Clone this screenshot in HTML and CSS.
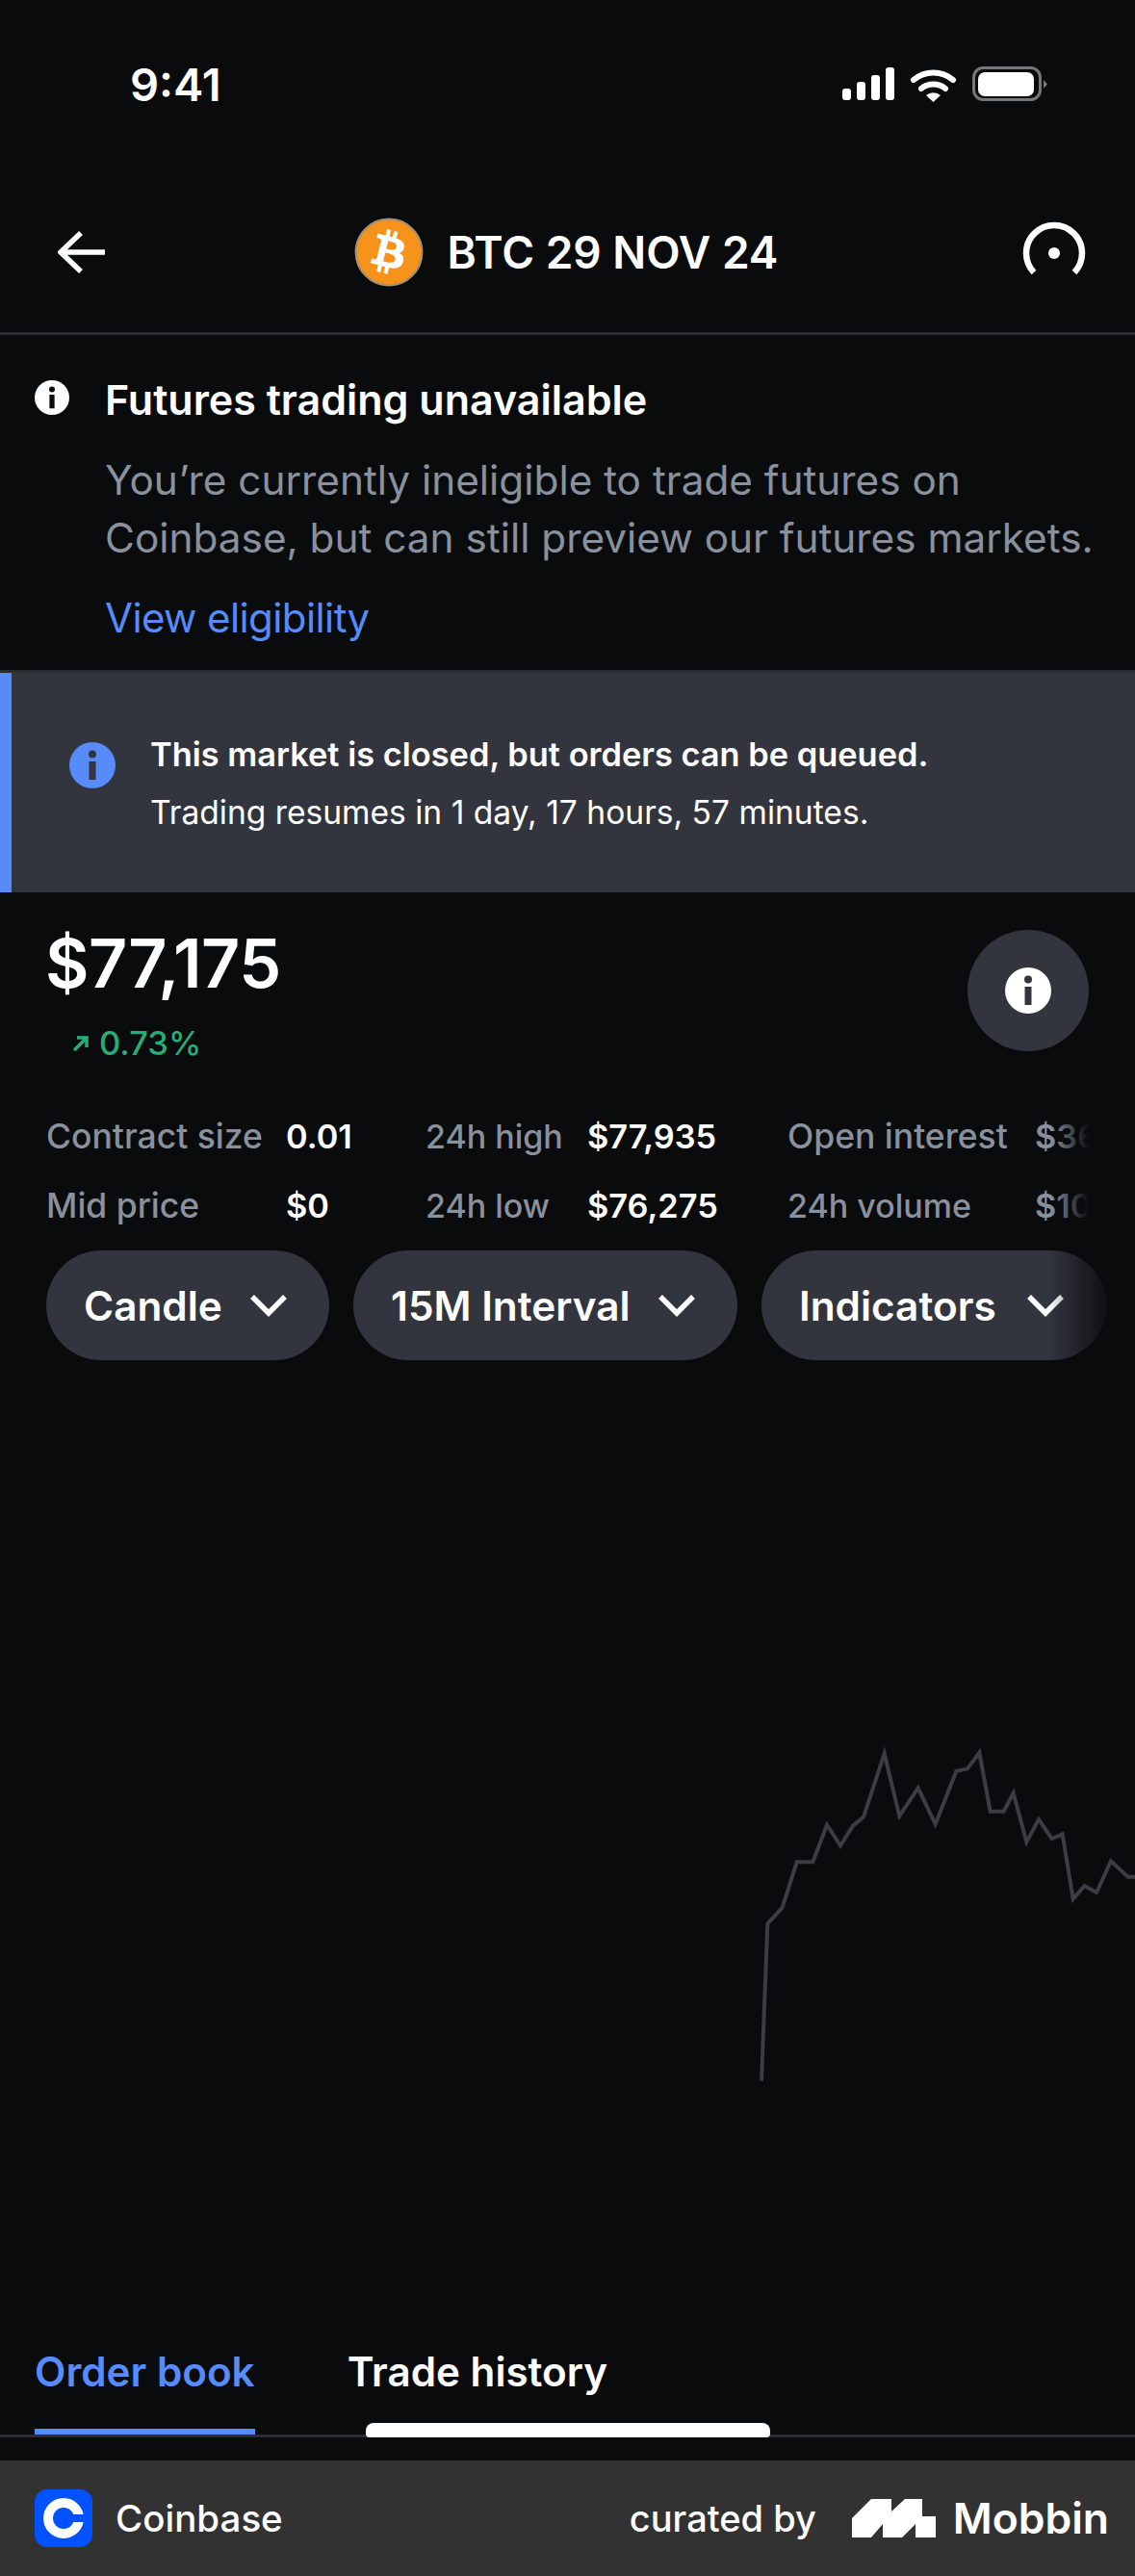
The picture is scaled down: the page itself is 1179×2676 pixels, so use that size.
FILE: index.html
```html
<!DOCTYPE html>
<html lang="en">
<head>
    <meta charset="UTF-8">
    <meta name="viewport" content="width=device-width, initial-scale=1.0">
    <title>BTC 29 NOV 24</title>
    <link rel="stylesheet" href="styles.css">
</head>
<body>
<div class="screen">
    <div class="status-bar">
        <span class="status-time">9:41</span>
        <svg class="status-icons" width="240" height="65" viewBox="0 0 240 65">
            <rect x="15" y="37" width="9" height="12" rx="3" fill="#fff"/>
            <rect x="30" y="30" width="9" height="19" rx="3" fill="#fff"/>
            <rect x="45" y="23" width="9" height="26" rx="3" fill="#fff"/>
            <rect x="60" y="15" width="9" height="34" rx="3" fill="#fff"/>
            <path d="M89 28 A32 32 0 0 1 130 28" fill="none" stroke="#fff" stroke-width="6" stroke-linecap="round"/>
            <path d="M97 37 A20 20 0 0 1 122 37" fill="none" stroke="#fff" stroke-width="6" stroke-linecap="round"/>
            <path d="M102 44 A12 12 0 0 1 117 44 L109.5 51 Z" fill="#fff"/>
            <rect x="151.5" y="15.5" width="69" height="33" rx="10" fill="none" stroke="#777" stroke-width="3"/>
            <rect x="156" y="20" width="58" height="25" rx="7" fill="#fff"/>
            <path d="M224 28 L228 32.500 L224 37 Z" fill="#777"/>
        </svg>
    </div>

    <header class="nav">
        <svg class="nav-back" width="50" height="44" viewBox="0 0 50 44">
            <path d="M24 2 L3 22 L24 42 M3 22 H49" fill="none" stroke="#fff" stroke-width="5.500"/>
        </svg>
        <div class="nav-title">
            <svg width="72" height="72" viewBox="0 0 64 64">
                <circle cx="32" cy="32" r="30.500" fill="#f7931a" stroke="#a8906f" stroke-width="2"/>
                <path fill="#fff" d="M46.100 27.400c.6-4.300-2.700-6.600-7.200-8.200l1.500-5.900-3.600-.9-1.400 5.700c-.9-.2-1.900-.5-2.900-.7l1.400-5.800-3.600-.9-1.500 5.900c-.8-.2-1.500-.3-2.200-.5l-5-1.200-1 3.800s2.700.6 2.600.7c1.500.4 1.700 1.300 1.700 2.100l-1.700 6.700c.1 0 .2.100.4.100l-.4-.1-2.400 9.400c-.2.400-.6 1.100-1.700.8 0 .1-2.600-.7-2.600-.7l-1.800 4.100 4.700 1.200c.9.200 1.700.4 2.600.7l-1.500 6 3.600.9 1.500-5.900c1 .3 1.900.5 2.900.8l-1.500 5.900 3.600.9 1.500-6c6.200 1.200 10.800.7 12.800-4.900 1.600-4.500-.1-7.100-3.300-8.800 2.300-.5 4.100-2.100 4.500-5.300zM37.900 38.900c-1.100 4.500-8.700 2.100-11.200 1.500l2-8c2.500.6 10.400 1.800 9.200 6.500zm1.100-11.600c-1 4.100-7.300 2-9.400 1.500l1.800-7.200c2.100.5 8.700 1.500 7.600 5.700z"/>
            </svg>
            <span>BTC 29 NOV 24</span>
        </div>
        <svg class="nav-gauge" width="90" height="80" viewBox="0 0 90 80">
            <path d="M24 65 A29 29 0 1 1 66 65" fill="none" stroke="#fff" stroke-width="6.500"/>
            <circle cx="45" cy="45" r="6" fill="#fff"/>
        </svg>
    </header>

    <section class="notice">
        <svg class="info-icon" width="36" height="36" viewBox="0 0 48 48">
            <circle cx="24" cy="24" r="24" fill="#fff"/>
            <circle cx="24" cy="12.500" r="4" fill="#0a0b0d"/>
            <rect x="20.500" y="20" width="7" height="19" fill="#0a0b0d"/>
        </svg>
        <div class="notice-body">
            <h2 class="notice-title">Futures trading unavailable</h2>
            <p class="notice-text">You’re currently ineligible to trade futures on<br>Coinbase, but can still preview our futures markets.</p>
            <a class="notice-link">View eligibility</a>
        </div>
    </section>

    <section class="closed">
        <svg class="closed-icon" width="48" height="48" viewBox="0 0 48 48">
            <circle cx="24" cy="24" r="24" fill="#578bfa"/>
            <circle cx="24" cy="12.500" r="4" fill="#32353d"/>
            <rect x="20.500" y="20" width="7" height="19" fill="#32353d"/>
        </svg>
        <div>
            <p class="closed-title">This market is closed, but orders can be queued.</p>
            <p class="closed-text">Trading resumes in 1 day, 17 hours, 57 minutes.</p>
        </div>
    </section>

    <section class="price-row">
        <div>
            <div class="price">$77,175</div>
            <div class="change">
                <svg width="20" height="20" viewBox="0 0 20 20">
                    <path d="M3 17 L16 4 M6 4 H16 V14" fill="none" stroke="#27ad75" stroke-width="3.500"/>
                </svg>
                <span>0.73%</span>
            </div>
        </div>
        <div class="round-btn">
            <svg width="48" height="48" viewBox="0 0 48 48">
                <circle cx="24" cy="24" r="24" fill="#fff"/>
                <circle cx="24" cy="12.500" r="4" fill="#32353d"/>
                <rect x="20.500" y="20" width="7" height="19" fill="#32353d"/>
            </svg>
        </div>
    </section>

    <section class="stats">
        <span class="stat-label">Contract size</span><span class="stat-value">0.01</span>
        <span class="stat-label stat-24h">24h high</span><span class="stat-value">$77,935</span>
        <span class="stat-label">Open interest</span><span class="stat-value stat-clipped">$36</span>
        <span class="stat-label">Mid price</span><span class="stat-value">$0</span>
        <span class="stat-label stat-24h">24h low</span><span class="stat-value">$76,275</span>
        <span class="stat-label stat-24h">24h volume</span><span class="stat-value stat-clipped">$10</span>
        <div class="stats-fade"></div>
    </section>

    <section class="pills">
        <div class="pill pill-candle"><span>Candle</span>
            <svg width="38" height="24" viewBox="0 0 38 24"><path d="M2 3 L19 20 L36 3" fill="none" stroke="#fff" stroke-width="5.500"/></svg>
        </div>
        <div class="pill pill-interval"><span>15M Interval</span>
            <svg width="38" height="24" viewBox="0 0 38 24"><path d="M2 3 L19 20 L36 3" fill="none" stroke="#fff" stroke-width="5.500"/></svg>
        </div>
        <div class="pill pill-indicators"><span>Indicators</span>
            <svg width="38" height="24" viewBox="0 0 38 24"><path d="M2 3 L19 20 L36 3" fill="none" stroke="#fff" stroke-width="5.500"/></svg>
            <div class="pill-fade"></div>
        </div>
    </section>

    <section class="chart">
        <svg width="439" height="400" viewBox="0 0 1317 1200">
            <polyline fill="none" stroke="#3a3d43" stroke-width="12" points="153,1145 172,655 218,605 263,463 313,463 357,347 399,412 438,350 471,323 536,125 583,320 641,232 695,345 760,180 795,172 832,122 866,305 908,305 938,248 979,400 1017,330 1058,390 1091,376 1124,578 1160,537 1197,558 1242,460 1295,509 1317,509"/>
        </svg>
    </section>

    <nav class="tabs">
        <div class="tab tab-active">Order book</div>
        <div class="tab">Trade history</div>
    </nav>
    <div class="home-bar"></div>

    <footer class="credit">
        <div class="credit-side">
            <svg width="60" height="60" viewBox="0 0 60 60">
                <rect width="60" height="60" rx="13" fill="#0052ff"/>
                <circle cx="30" cy="30" r="16" fill="none" stroke="#fff" stroke-width="10"/>
                <rect x="30" y="26" width="24" height="8" fill="#0052ff"/>
            </svg>
            <span class="credit-app">Coinbase</span>
        </div>
        <div class="credit-side">
            <span class="credit-by">curated by</span>
            <svg class="mobbin-mark" width="87" height="40" viewBox="0 0 87 40">
                <polygon fill="#fff" points="0,20 20,0 41,0 41,13 55,0 73,0 73,18 87,18 87,40 66,40 66,26 52,40 32,40 32,26 20,40 0,40"/>
            </svg>
            <span class="credit-mobbin">Mobbin</span>
        </div>
    </footer>
</div>
</body>
</html>
```

FILE: styles.css
```css
* {
    box-sizing: border-box;
}
body {
    margin: 0;
    background: #0a0b0d;
    font-family: Inter, "Liberation Sans", sans-serif;
    color: #fff;
}
p, h2 {
    margin: 0;
}
.screen {
    position: relative;
    width: 1179px;
    height: 2676px;
    display: flex;
    flex-direction: column;
    overflow: hidden;
}

/* status bar */
.status-bar {
    height: 175px;
    padding: 55px 79px 0 135px;
    display: flex;
    justify-content: space-between;
    align-items: flex-start;
}
.status-time {
    font-size: 47px;
    line-height: 65px;
    font-weight: 600;
}

/* nav */
.nav {
    height: 173px;
    padding: 3px 52px 0 60px;
    border-bottom: 3px solid #2a2d31;
    display: flex;
    align-items: center;
    justify-content: space-between;
}
.nav-title {
    display: flex;
    align-items: center;
    gap: 25px;
    margin-left: 16px;
    font-size: 46px;
    font-weight: 600;
}
.nav-gauge {
    margin-bottom: 7px;
    margin-right: -13px;
}

/* futures notice */
.notice {
    height: 351px;
    padding: 47px 14px 0 36px;
    border-bottom: 3px solid #2a2d31;
    display: flex;
    gap: 37px;
}
.notice-title {
    font-size: 43px;
    line-height: 60px;
    font-weight: 600;
    margin-top: -10px;
}
.notice-text {
    font-size: 42.300px;
    line-height: 60px;
    color: #8a919e;
    margin-top: 24px;
}
.notice-link {
    display: block;
    font-size: 42px;
    line-height: 60px;
    letter-spacing: -0.6px;
    color: #578bfa;
    margin-top: 23px;
}

/* market closed */
.closed {
    height: 228px;
    padding-top: 55px;
    padding-left: 60px;
    background: #32353d;
    border-left: 12px solid #578bfa;
    display: flex;
    gap: 36px;
}
.closed-icon {
    margin-top: 17px;
}
.closed-title, .closed-text {
    font-size: 33.600px;
    line-height: 60px;
}
.closed-title {
    font-size: 34.400px;
    font-weight: 600;
}

/* price */
.price-row {
    height: 217px;
    padding: 36px 48px 0;
    display: flex;
    justify-content: space-between;
    align-items: flex-start;
}
.price {
    margin-left: -1px;
    font-size: 70px;
    line-height: 76px;
    font-weight: 600;
    letter-spacing: -0.5px;
}
.change {
    display: flex;
    align-items: center;
    gap: 9px;
    margin: 22px 0 0 26px;
    font-size: 34.500px;
    line-height: 46px;
    font-weight: 500;
    color: #27ad75;
}
.round-btn {
    width: 126px;
    height: 126px;
    margin-top: 3px;
    border-radius: 50%;
    background: #32353d;
    display: flex;
    align-items: center;
    justify-content: center;
}

/* stats */
.stats {
    position: relative;
    width: 1131px;
    height: 155px;
    overflow: hidden;
    padding-left: 48px;
    display: grid;
    grid-template-columns: 249px 145px 168px 208px 257px 60px;
    grid-auto-rows: 72px;
    align-items: center;
    font-size: 34.300px;
    font-weight: 500;
    white-space: nowrap;
}
.stat-label {
    font-size: 35.500px;
    color: #8a919e;
}
.stat-24h {
    font-size: 34px;
}
.stat-value {
    font-weight: 600;
}
.stat-clipped {
    color: #8a919e;
}
.stats-fade {
    position: absolute;
    top: 0;
    right: 0;
    bottom: 0;
    width: 40px;
    background: linear-gradient(to right, rgba(10, 11, 13, 0), #0a0b0d);
}

/* pills */
.pills {
    display: flex;
    gap: 25px;
    padding-left: 48px;
    height: 114px;
}
.pill {
    position: relative;
    flex-shrink: 0;
    height: 114px;
    border-radius: 57px;
    background: #32353d;
    display: flex;
    align-items: center;
    justify-content: space-between;
    padding: 0 44px 0 39px;
    font-size: 42.300px;
    font-weight: 600;
    overflow: hidden;
}
.pill-candle {
    width: 294px;
}
.pill-interval {
    width: 399px;
}
.pill-indicators {
    width: 358px;
}
.pill-fade {
    position: absolute;
    top: 0;
    right: 0;
    bottom: 0;
    width: 60px;
    background: linear-gradient(to right, rgba(10, 11, 13, 0), rgba(10, 11, 13, 0.85));
}

/* chart */
.chart {
    flex: 1;
    padding-top: 367px;
    display: flex;
    justify-content: flex-end;
    align-items: flex-start;
}

/* tabs */
.tabs {
    height: 119px;
    padding-left: 36px;
    display: flex;
    gap: 96px;
    border-bottom: 3px solid #2a2d31;
}
.tab {
    height: 116px;
    padding-top: 21px;
    font-size: 42.200px;
    line-height: 60px;
    font-weight: 600;
}
.tab-active {
    color: #578bfa;
    border-bottom: 6px solid #578bfa;
}
.home-bar {
    position: absolute;
    left: 380px;
    top: 2517px;
    width: 420px;
    height: 15px;
    border-radius: 8px 8px 4px 4px;
    background: #fff;
}

/* footer strip */
.credit {
    height: 120px;
    margin-top: 24px;
    padding: 0 27px 0 36px;
    background: #323232;
    display: flex;
    align-items: center;
    justify-content: space-between;
}
.credit-side {
    display: flex;
    align-items: center;
}
.credit-app {
    margin-left: 24px;
    font-size: 38.500px;
    font-weight: 500;
}
.credit-by {
    font-size: 38px;
    font-weight: 500;
}
.mobbin-mark {
    margin-left: 37px;
}
.credit-mobbin {
    margin-left: 18px;
    font-size: 44.400px;
    font-weight: 600;
}
```
